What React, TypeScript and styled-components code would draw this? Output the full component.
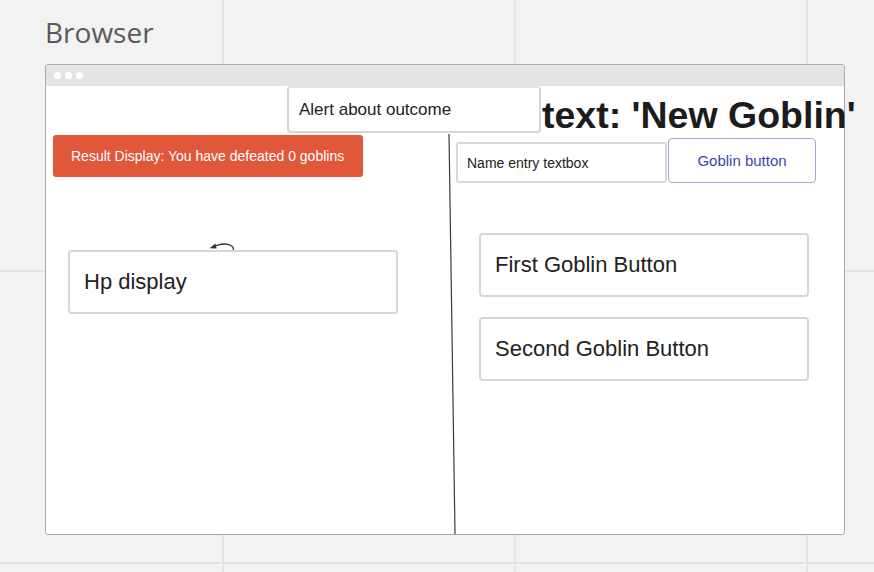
import React from "react";
import styled, { createGlobalStyle } from "styled-components";

const Global = createGlobalStyle`
  html, body {
    margin: 0;
    padding: 0;
  }
  body {
    min-height: 100vh;
    background-color: #f2f2f2;
    background-image:
      linear-gradient(to right, #e4e4e4 2px, transparent 2px),
      linear-gradient(to bottom, #e4e4e4 2px, transparent 2px);
    background-size: 292px 292px;
    background-position: 222px 270px;
    font-family: "Liberation Sans", Arial, sans-serif;
  }
`;

const Page = styled.div`
  padding: 13px 0 0 45px;
`;

const BoardTitle = styled.h1`
  margin: 0;
  font: 400 28px/38px "Open Sans", sans-serif;
  color: #5a5a5a;
`;

const Frame = styled.div`
  box-sizing: border-box;
  margin-top: 13px;
  width: 800px;
  height: 471px;
  border: 1px solid #a9a9a9;
  border-radius: 3px;
  background: #fff;
  display: flex;
  flex-direction: column;
`;

const TitleBar = styled.div`
  height: 21px;
  flex: none;
  background: #e4e4e4;
  display: flex;
  align-items: flex-start;
  gap: 4px;
  padding: 7px 0 0 8px;
  box-sizing: border-box;
`;

const Dot = styled.span`
  width: 7px;
  height: 7px;
  border-radius: 50%;
  background: #fff;
`;

const Content = styled.div`
  position: relative;
  flex: 1;
  display: flex;
  flex-direction: column;
`;

const TopRow = styled.div`
  display: flex;
  align-items: flex-start;
  height: 48px;
  flex: none;
  padding-left: 241px;
`;

const AlertBox = styled.div`
  box-sizing: border-box;
  flex: none;
  width: 254px;
  height: 47px;
  border: 2px solid #d6d6d6;
  border-top-color: #e2e2e2;
  border-radius: 4px;
  background: #fff;
  display: flex;
  align-items: center;
  padding-left: 10px;
  font-size: 17px;
  color: #222;
  position: relative;
  z-index: 1;
`;

const Heading = styled.h2`
  flex: none;
  margin: 8px 0 0 1px;
  font-size: 37.5px;
  font-weight: 700;
  line-height: normal;
  white-space: nowrap;
  color: #1c1c1c;
  position: relative;
  z-index: 1;
`;

const Columns = styled.div`
  flex: 1;
  display: flex;
`;

const LeftCol = styled.div`
  width: 406px;
  box-sizing: border-box;
  padding-left: 7px;
  display: flex;
  flex-direction: column;
  align-items: flex-start;
`;

const ResultBox = styled.div`
  box-sizing: border-box;
  margin-top: 1px;
  width: 310px;
  height: 42px;
  background: #e0573a;
  border-radius: 3px;
  color: #fff;
  font-size: 14px;
  padding-left: 18px;
  display: flex;
  align-items: center;
`;

const ArrowIcon = styled.svg`
  display: block;
  margin: 63px 0 0 156px;
  width: 27px;
  height: 10px;
  overflow: visible;
`;

const Panel = styled.div<{ $indent?: number }>`
  box-sizing: border-box;
  margin-left: ${(p) => p.$indent ?? 0}px;
  width: 330px;
  height: 64px;
  border: 2px solid #d6d6d6;
  border-radius: 4px;
  background: #fff;
  padding-left: 14px;
  display: flex;
  align-items: center;
  font-size: 22px;
  color: #222;
`;

const RightCol = styled.div`
  flex: 1;
  display: flex;
  flex-direction: column;
  padding-left: 4px;
`;

const EntryRow = styled.div`
  display: flex;
  align-items: flex-end;
  margin-top: 4px;
`;

const TextBox = styled.div`
  box-sizing: border-box;
  width: 211px;
  height: 41px;
  border: 2px solid #d9d9d9;
  border-radius: 3px;
  padding-left: 9px;
  display: flex;
  align-items: center;
  font-size: 14px;
  color: #222;
`;

const GoblinButton = styled.div`
  box-sizing: border-box;
  margin-left: 1px;
  width: 148px;
  height: 45px;
  border: 1.5px solid #a3a8d9;
  border-radius: 4px;
  display: flex;
  align-items: center;
  justify-content: center;
  font-size: 15px;
  color: #3a44b0;
`;

const ButtonList = styled.div`
  display: flex;
  flex-direction: column;
  gap: 20px;
  margin: 50px 0 0 23px;
`;

const Connector = styled.svg`
  position: absolute;
  left: 0;
  top: 0;
  width: 100%;
  height: 100%;
  pointer-events: none;
`;

export default function App() {
  return (
    <>
      <Global />
      <Page>
        <BoardTitle>Browser</BoardTitle>
        <Frame>
          <TitleBar>
            <Dot />
            <Dot />
            <Dot />
          </TitleBar>
          <Content>
            <Connector>
              <line x1="403" y1="48" x2="409" y2="448" stroke="#3a3a3a" strokeWidth="1.2" />
            </Connector>
            <TopRow>
              <AlertBox>Alert about outcome</AlertBox>
              <Heading>text: 'New Goblin'</Heading>
            </TopRow>
            <Columns>
              <LeftCol>
                <ResultBox>Result Display: You have defeated 0 goblins</ResultBox>
                <ArrowIcon viewBox="0 0 27 10">
                  <path d="M24.5 10 C24.5 4.5, 16 2, 6 6" fill="none" stroke="#333" strokeWidth="1.3" />
                  <polygon points="0.5,8.2 6.5,3.6 7.6,8.6" fill="#333" />
                </ArrowIcon>
                <Panel $indent={15}>Hp display</Panel>
              </LeftCol>
              <RightCol>
                <EntryRow>
                  <TextBox>Name entry textbox</TextBox>
                  <GoblinButton>Goblin button</GoblinButton>
                </EntryRow>
                <ButtonList>
                  <Panel>First Goblin Button</Panel>
                  <Panel>Second Goblin Button</Panel>
                </ButtonList>
              </RightCol>
            </Columns>
          </Content>
        </Frame>
      </Page>
    </>
  );
}
